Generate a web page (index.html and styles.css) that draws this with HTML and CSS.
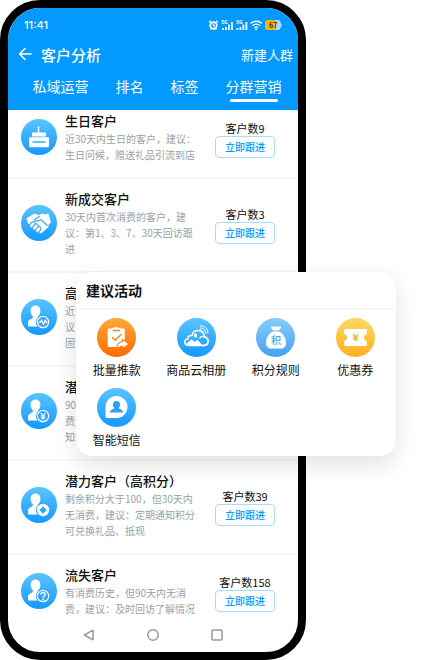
FILE: index.html
```html
<!DOCTYPE html>
<html lang="zh-CN">
<head>
    <meta charset="UTF-8" />
    <meta name="viewport" content="width=device-width, initial-scale=1.0" />
    <title>客户分析</title>
    <link rel="stylesheet" href="styles.css">
</head>
<body>

    <!-- Shared gradients and the person figure used by the customer icons -->
    <svg class="defs" width="0" height="0" aria-hidden="true">
        <defs>
            <linearGradient id="blue" x1="0" y1="0" x2="0" y2="1">
                <stop offset="0" stop-color="#5ac4ff" />
                <stop offset="1" stop-color="#1698ff" />
            </linearGradient>
            <linearGradient id="sky" x1="0" y1="0" x2="0" y2="1">
                <stop offset="0" stop-color="#87cdfa" />
                <stop offset="1" stop-color="#43a3ee" />
            </linearGradient>
            <linearGradient id="orange" x1="0" y1="0" x2="0" y2="1">
                <stop offset="0" stop-color="#ffa837" />
                <stop offset="1" stop-color="#ff6a00" />
            </linearGradient>
            <linearGradient id="yellow" x1="0" y1="0" x2="0" y2="1">
                <stop offset="0" stop-color="#ffd864" />
                <stop offset="1" stop-color="#fdb022" />
            </linearGradient>
            <g id="person">
                <circle cx="18" cy="18" r="18" fill="url(#blue)" />
                <path d="M14.500 6.500c-3.300 0-4.900 2.300-4.900 5.400 0 2.300.9 4 2.200 5.300.4 1.700-.5 2.300-2.200 3C7.800 21 7 22 7 24v2.500c0 .6.300 1 1 1h12V20.500c-1.800-.8-3.300-1-2.800-3.300 1.300-1.300 2.200-3 2.200-5.300 0-3.100-1.700-5.400-4.900-5.400z" fill="#fff" />
                <circle cx="22" cy="23" r="7.200" fill="#2ba3ff" />
            </g>
        </defs>
    </svg>

    <div class="stage">
        <div class="phone">
            <header class="header">
                <div class="status">
                    <span class="time">11:41</span>
                    <svg class="status-icons" width="74" height="12" viewBox="0 0 74 12" aria-hidden="true">
                        <!-- alarm -->
                        <circle cx="5.500" cy="6.500" r="3.300" fill="none" stroke="#fff" stroke-width="1.700" />
                        <path d="M1 3.500L3 1.800M10 3.500L8 1.800M2.500 10.500l1-1M8.500 10.500l-1-1M5.500 4.500v2.300h1.500" fill="none" stroke="#fff" stroke-width="1.300" />
                        <!-- two signals -->
                        <g fill="#fff">
                            <text x="13" y="4.500" font-size="5" font-weight="700">5G</text>
                            <path d="M14 9h1.800v2H14zM17 8h1.800v3H17zM20 5.500h1.800V11H20zM23 3h1.800v8H23z" />
                            <text x="28" y="4.500" font-size="5" font-weight="700">5G</text>
                            <path d="M28.500 9h1.800v2h-1.800zM31.500 8h1.800v3h-1.800zM34.500 5.500h1.800V11h-1.800zM37.500 3h1.800v8h-1.800z" />
                        </g>
                        <!-- wifi -->
                        <path d="M42.500 4.500c3-3 8.500-3 11.500 0M44.500 6.700c2-2 5.500-2 7.500 0M46.300 8.700c1.200-1 2.700-1 3.900 0" fill="none" stroke="#fff" stroke-width="1.300" />
                        <circle cx="48.200" cy="10.300" r="1" fill="#fff" />
                        <!-- battery -->
                        <path d="M59.500 1H70a2.500 2.500 0 0 1 2.500 2.500V4l1.200 1v2.500l-1.200 1A2.500 2.500 0 0 1 70 11H59.500z" fill="#a9dcff" />
                        <path d="M59.500 1H68v10h-8.500A2.500 2.500 0 0 1 57 8.500v-5A2.500 2.500 0 0 1 59.500 1z" fill="#fcb10c" />
                        <text x="61" y="8.500" font-size="7" font-weight="700" fill="#333">67</text>
                    </svg>
                </div>
                <div class="title-bar">
                    <button class="back" aria-label="返回">
                        <svg width="14" height="14" viewBox="0 0 14 14"><path d="M13 7H1.500M7 1.500L1.500 7L7 12.500" fill="none" stroke="#fff" stroke-width="1.600" stroke-linecap="round" stroke-linejoin="round" /></svg>
                    </button>
                    <h1>客户分析</h1>
                    <a class="new-group" href="#">新建人群</a>
                </div>
                <nav class="tabs">
                    <a href="#">私域运营</a>
                    <a href="#">排名</a>
                    <a href="#">标签</a>
                    <a class="active" href="#">分群营销</a>
                </nav>
            </header>

            <ul class="customers">
                <li class="customer">
                    <svg class="avatar" viewBox="0 0 36 36" aria-hidden="true">
                        <circle cx="18" cy="18" r="18" fill="url(#blue)" />
                        <path d="M17.500 9v5" stroke="#fff" stroke-width="1.500" />
                        <circle cx="17.500" cy="8.500" r="1" fill="#fff" />
                        <path d="M12 13.500h12c.6 0 1 .4 1 1V17.500H11v-3c0-.6.400-1 1-1z" fill="#fff" />
                        <rect x="8" y="18.300" width="20" height="10" rx="1.300" fill="#fff" />
                        <path d="M11.500 23h13" stroke="#37a9ff" stroke-width="1.300" />
                    </svg>
                    <div class="info">
                        <h2>生日客户</h2>
                        <p>近30天内生日的客户，建议：生日问候，赠送礼品引流到店</p>
                    </div>
                    <div class="action">
                        <span>客户数9</span>
                        <button class="follow">立即跟进</button>
                    </div>
                </li>
                <li class="customer">
                    <svg class="avatar" viewBox="0 0 36 36" aria-hidden="true">
                        <circle cx="18" cy="18" r="18" fill="url(#blue)" />
                        <path d="M6 13.500L13.500 9l4 1.500L22 9l2.500 1.200 2.500-1.200 2.500 8.500-2.500 2v2.500L20 28l-4-2.500-6-6-2.500-1z" fill="#fff" stroke="#fff" stroke-width="1" stroke-linejoin="round" />
                        <path d="M18.500 11.500l-5 3.200c.8 2 2.800 1.800 4.500.6l2.200-.5 6 5.700" fill="none" stroke="#38aaff" stroke-width="1.200" stroke-linecap="round" stroke-linejoin="round" />
                        <path d="M10.200 20.800l2-2.200M13.300 23.200l2-2.200M16.300 25.500l1.800-2" stroke="#38aaff" stroke-width="5" stroke-linecap="round" />
                        <path d="M10.200 20.800l2-2.200M13.300 23.200l2-2.200M16.300 25.500l1.800-2" stroke="#fff" stroke-width="2.700" stroke-linecap="round" />
                    </svg>
                    <div class="info">
                        <h2>新成交客户</h2>
                        <p>30天内首次消费的客户，建议：第1、3、7、30天回访跟进</p>
                    </div>
                    <div class="action">
                        <span>客户数3</span>
                        <button class="follow">立即跟进</button>
                    </div>
                </li>
                <li class="customer">
                    <svg class="avatar" viewBox="0 0 36 36" aria-hidden="true">
                        <use href="#person" />
                        <circle cx="22" cy="23" r="5.700" fill="none" stroke="#fff" stroke-width="1.200" />
                        <path d="M17.500 23.500h1.500l1.500-2.500 2 4.500 1.700-4.500 1.300 2.500h1" fill="none" stroke="#fff" stroke-width="1.300" stroke-linejoin="round" />
                    </svg>
                    <div class="info">
                        <h2>高价值客户</h2>
                        <p>近一年内多次消费的客户，建议：定期回访客户，及时维护固定专人服务</p>
                    </div>
                </li>
                <li class="customer">
                    <svg class="avatar" viewBox="0 0 36 36" aria-hidden="true">
                        <use href="#person" />
                        <circle cx="22" cy="23" r="5.700" fill="none" stroke="#fff" stroke-width="1.200" />
                        <path d="M19.800 20l2.200 2.800 2.200-2.800M22 22.500v4M19.800 23h4.400M19.800 24.800h4.400" fill="none" stroke="#fff" stroke-width="1.200" />
                    </svg>
                    <div class="info">
                        <h2>潜力客户</h2>
                        <p>90天内储值余额未进行过消费，建议：定期回访客户，通知余额到期</p>
                    </div>
                </li>
                <li class="customer">
                    <svg class="avatar" viewBox="0 0 36 36" aria-hidden="true">
                        <use href="#person" />
                        <circle cx="22" cy="23" r="6.200" fill="#fff" />
                        <circle cx="22" cy="23" r="2.500" fill="#2ba3ff" />
                        <path d="M22 19.800v6.400M18.800 23h6.400" stroke="#2ba3ff" stroke-width="2" />
                    </svg>
                    <div class="info">
                        <h2>潜力客户（高积分）</h2>
                        <p>剩余积分大于100，但30天内无消费，建议：定期通知积分可兑换礼品、抵现</p>
                    </div>
                    <div class="action">
                        <span>客户数39</span>
                        <button class="follow">立即跟进</button>
                    </div>
                </li>
                <li class="customer">
                    <svg class="avatar" viewBox="0 0 36 36" aria-hidden="true">
                        <use href="#person" />
                        <circle cx="22" cy="23" r="5.700" fill="none" stroke="#fff" stroke-width="1.200" />
                        <path d="M20 21.600c0-2.800 4.200-2.700 4.200-.2 0 1.500-2 1.600-2 3.300" fill="none" stroke="#fff" stroke-width="1.500" />
                        <circle cx="22.200" cy="26.500" r=".9" fill="#fff" />
                    </svg>
                    <div class="info">
                        <h2>流失客户</h2>
                        <p>有消费历史，但90天内无消费，建议：及时回访了解情况</p>
                    </div>
                    <div class="action">
                        <span>客户数158</span>
                        <button class="follow">立即跟进</button>
                    </div>
                </li>
            </ul>

            <footer class="system-nav">
                <button aria-label="后退"><svg width="12" height="12" viewBox="0 0 12 12"><path d="M10 1.200v9.600L1.500 6z" /></svg></button>
                <button aria-label="主页"><svg width="12" height="12" viewBox="0 0 12 12"><circle cx="6" cy="6" r="5.200" /></svg></button>
                <button aria-label="任务"><svg width="12" height="12" viewBox="0 0 12 12"><rect x="1" y="1" width="10" height="10" rx="1" /></svg></button>
            </footer>
        </div>

        <!-- Suggested activities, floats over the phone -->
        <section class="activities">
            <h2>建议活动</h2>
            <div class="activity-grid">
                <a class="activity" href="#">
                    <svg viewBox="0 0 39 39" aria-hidden="true">
                        <circle cx="19.500" cy="19.500" r="19.500" fill="url(#orange)" />
                        <path d="M12 10.500h3v-.7h2.500c.3-1.200 3.200-1.200 3.500 0h2.500v.7h3c.8 0 1.300.5 1.300 1.300V22l-6.500 7H12c-.8 0-1.300-.5-1.300-1.300V11.800c0-.8.5-1.300 1.300-1.300z" fill="#fff" />
                        <path d="M15.500 12.500h7.500M15 19l3.200 3.200 6-6" fill="none" stroke="#ff8419" stroke-width="1.400" />
                        <path d="M26 22l5 4-5 4v-2.300c-2.500-.2-3.700.6-5.500 2.300 0-3.500 1.800-5.700 5.500-5.900z" fill="#fff" stroke="#ff7a10" stroke-width="2.200" paint-order="stroke" stroke-linejoin="round" />
                    </svg>
                    <span>批量推款</span>
                </a>
                <a class="activity" href="#">
                    <svg viewBox="0 0 39 39" aria-hidden="true">
                        <circle cx="19.500" cy="19.500" r="19.500" fill="url(#blue)" />
                        <path d="M12 27.500h14.500c6 0 6-7.500.8-8.500-.5-8-10.800-8.500-12.300-1.500-3.300-.3-4.500 1.500-4 3.300-4.500.7-4.500 6.500 1 6.700z" fill="none" stroke="#fff" stroke-width="1.500" />
                        <path d="M8.800 26l5.500-4.700 3.500 2.500 2.500-2 5 5.200H12z" fill="#fff" />
                        <path d="M22.500 20.500a4.600 4.600 0 1 1 1 6" fill="none" stroke="#fff" stroke-width="1.300" />
                        <ellipse cx="18.500" cy="17.500" rx="1.500" ry="2.200" fill="#fff" />
                        <path d="M22.500 11.800c2.500.2 4 1.700 4.300 3.900M22.800 9.800c3.700.2 6 2.500 6.300 5.800M23.200 7.800c4.700.3 7.500 3 7.800 7.500" fill="none" stroke="#fff" stroke-width="1" />
                    </svg>
                    <span>商品云相册</span>
                </a>
                <a class="activity" href="#">
                    <svg viewBox="0 0 39 39" aria-hidden="true">
                        <circle cx="19.500" cy="19.500" r="19.500" fill="url(#sky)" />
                        <path d="M15.500 8.500h9c.5 0 .8.500.5 1l-2 3h-6l-2-3c-.3-.5 0-1 .5-1zM17 13.500h6c4 1.800 7 6.500 7 11 0 4-2 6-5 6H15c-3 0-5-2-5-6 0-4.500 3-9.200 7-11z" fill="#fff" />
                        <text x="20" y="26" text-anchor="middle" font-size="10" font-weight="500" fill="#43a8f0">积</text>
                    </svg>
                    <span>积分规则</span>
                </a>
                <a class="activity" href="#">
                    <svg viewBox="0 0 39 39" aria-hidden="true">
                        <circle cx="19.500" cy="19.500" r="19.500" fill="url(#yellow)" />
                        <path d="M9.500 11h20c.8 0 1.300.5 1.300 1.300V16c-3.800.7-3.800 6.300 0 7v3.700c0 .8-.5 1.300-1.300 1.300h-20c-.8 0-1.300-.5-1.300-1.300V23c3.800-.7 3.800-6.300 0-7v-3.700c0-.8.5-1.300 1.300-1.300z" fill="#fff" />
                        <path d="M17 16.200l2.500 3 2.500-3M19.500 19v4M17 19.500h5M17 21.400h5" fill="none" stroke="#fdb72d" stroke-width="1.400" />
                    </svg>
                    <span>优惠券</span>
                </a>
                <a class="activity" href="#">
                    <svg viewBox="0 0 39 39" aria-hidden="true">
                        <circle cx="19.500" cy="19.500" r="19.500" fill="url(#blue)" />
                        <path d="M8.500 19.500a11 11 0 1 1 11 10.500H9.700c-.7 0-1.200-.5-1.200-1.200z" fill="#fff" />
                        <path d="M19.500 13c-2.300 0-3.600 1.700-3.600 3.700 0 1.500.7 2.500 1.600 3.300-.2 1-4.500 1.200-4.500 4.500h13c0-3.300-4.300-3.500-4.500-4.500.9-.8 1.600-1.800 1.600-3.300 0-2-1.300-3.700-3.600-3.700z" fill="#2c9ff5" />
                    </svg>
                    <span>智能短信</span>
                </a>
            </div>
        </section>
    </div>

</body>
</html>
```

FILE: styles.css
```css
* {
    margin: 0;
    padding: 0;
    box-sizing: border-box;
}
body {
    background: #fff;
    color: #111;
    font-family: "Noto Sans CJK SC", "Noto Sans", sans-serif;
    font-size: 12px;
}
a {
    color: inherit;
    text-decoration: none;
}
button {
    border: none;
    background: none;
    font-family: inherit;
    cursor: pointer;
}
svg {
    display: block;
}
.defs {
    position: absolute;
}
.stage {
    position: relative;
}

/* Phone */
.phone {
    margin-right: 136px;
    border: 8px solid #000;
    border-radius: 40px;
    background: #fff;
    overflow: hidden;
}
.header {
    position: relative;
    z-index: 1;
    background: #0399ff;
    color: #fff;
}
.status {
    display: flex;
    align-items: center;
    justify-content: space-between;
    height: 34px;
    padding: 0 16px;
}
.time {
    font-family: Inter, sans-serif;
    font-size: 11px;
    font-weight: 500;
}
.title-bar {
    display: flex;
    align-items: center;
    height: 24px;
    padding: 0 5px 0 10px;
}
.title-bar h1 {
    margin-left: 9px;
    font-size: 15px;
    font-weight: 500;
}
.new-group {
    margin-left: auto;
    font-size: 13px;
}
.tabs {
    display: flex;
    justify-content: center;
    gap: 27px;
    height: 44px;
    padding: 10px 0 0 8px;
    font-size: 14px;
    line-height: 20px;
}
.tabs .active::after {
    content: "";
    display: block;
    height: 3px;
    margin: 3px 4px 0;
    border-radius: 2px;
    background: #fff;
}

/* Customer list, its first row is scrolled partly under the header */
.customers {
    margin-top: -9px;
    list-style: none;
}
.customer {
    display: flex;
    align-items: center;
    padding: 10px 23px 14px 13px;
    border-bottom: 2px solid #f6f6f7;
}
.customer:last-child {
    padding-bottom: 0;
    border-bottom: none;
}
.avatar {
    flex: none;
    width: 36px;
    height: 36px;
}
.info {
    width: 136px;
    margin-left: 8px;
}
.info h2 {
    font-size: 13px;
    font-weight: 500;
    line-height: 20px;
    white-space: nowrap;
}
.info p {
    color: #9a9fa8;
    font-size: 10px;
    line-height: 16px;
}
.action {
    display: flex;
    flex-direction: column;
    align-items: center;
    margin-left: auto;
    padding-top: 4px;
    font-size: 11px;
    line-height: 16px;
}
.follow {
    width: 60px;
    height: 22px;
    border: 1px solid #a8dcfb;
    border-radius: 4px;
    color: #0399ff;
    font-size: 10px;
    font-weight: 500;
    line-height: 18px;
}
.system-nav {
    display: flex;
    align-items: center;
    justify-content: center;
    gap: 52px;
    height: 35px;
}
.system-nav svg {
    fill: none;
    stroke: #999;
    stroke-width: 1.5;
    stroke-linejoin: round;
}

/* Suggested activities card */
.activities {
    position: absolute;
    z-index: 2;
    top: 272px;
    left: 76px;
    right: 46px;
    border-radius: 16px;
    background: #fff;
    box-shadow: 0 8px 24px rgba(0, 0, 0, 0.12);
}
.activities h2 {
    margin: 0 2px;
    padding: 0 8px;
    border-bottom: 2px solid #f6f6f7;
    font-size: 14px;
    font-weight: 700;
    line-height: 36px;
}
.activity-grid {
    display: grid;
    grid-template-columns: repeat(4, 1fr);
    row-gap: 10px;
    padding: 8px 1px;
}
.activity {
    display: flex;
    flex-direction: column;
    align-items: center;
    gap: 5px;
    line-height: 16px;
}
.activity svg {
    width: 39px;
    height: 39px;
}
```
